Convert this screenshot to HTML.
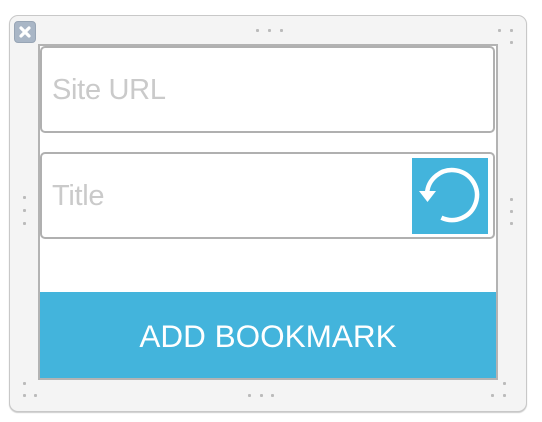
<!DOCTYPE html>
<html><head><style>
body{margin:0;width:542px;height:422px;background:#fff;position:relative;overflow:hidden;font-family:"Liberation Sans",Helvetica,sans-serif}
.panel{position:absolute;left:9px;top:15px;width:516px;height:395px;border:1px solid #c8c8c8;border-radius:9px;background:#f4f4f4;box-shadow:0 1px 1px #ccc}
.inner{position:absolute;left:38px;top:44px;width:456px;height:333px;background:#fff;border:2px solid #b3b3b3;border-bottom:none}
.inp{position:absolute;left:40px;width:451px;height:83px;border:2px solid #b0b0b0;border-radius:5px;background:#fff}
.ph{position:absolute;left:10px;top:26px;font-size:29px;color:#cacaca;font-weight:300;letter-spacing:-0.3px}
.btn{position:absolute;left:38px;top:292px;width:460px;height:88px;background:#43b4dc;border:2px solid #b3b3b3;border-top:none;box-sizing:border-box;color:#fff;font-size:31.5px;text-align:center;line-height:88px}
.d{position:absolute;width:3px;height:3px;background:#bbb;border-radius:1px}
.close{position:absolute;left:14px;top:21px;width:22px;height:22px;border-radius:4px;background:#a9b6c6;border:1px solid #98a5b5;box-sizing:border-box}
</style></head><body>
<div class="panel"></div>
<div class="inner"></div>
<div class="inp" style="top:46px"><span class="ph">Site URL</span></div>
<div class="inp" style="top:152px"><span class="ph">Title</span>
<div style="position:absolute;left:370px;top:4px;width:76px;height:76px;background:#43b4dc">
<svg width="76" height="76" viewBox="0 0 76 76"><path d="M15 36 A25 25 0 1 1 29.4 59.7" fill="none" stroke="#fff" stroke-width="4.5"/><path d="M7 33 L24 33 L15.5 44 Z" fill="#fff"/></svg></div></div>
<div class="btn">ADD BOOKMARK</div>
<div class="close"><svg width="20" height="20" viewBox="0 0 20 20"><path d="M6 6 L14 14 M14 6 L6 14" stroke="#fff" stroke-width="3.2" stroke-linecap="round"/></svg></div>
<div class="d" style="left:256px;top:29px"></div><div class="d" style="left:268px;top:29px"></div><div class="d" style="left:280px;top:29px"></div>
<div class="d" style="left:498px;top:29px"></div><div class="d" style="left:510px;top:29px"></div><div class="d" style="left:510px;top:41px"></div>
<div class="d" style="left:23px;top:196px"></div><div class="d" style="left:23px;top:209px"></div><div class="d" style="left:23px;top:222px"></div>
<div class="d" style="left:510px;top:198px"></div><div class="d" style="left:510px;top:210px"></div><div class="d" style="left:510px;top:222px"></div>
<div class="d" style="left:23px;top:382px"></div><div class="d" style="left:23px;top:394px"></div><div class="d" style="left:34px;top:394px"></div>
<div class="d" style="left:248px;top:394px"></div><div class="d" style="left:260px;top:394px"></div><div class="d" style="left:271px;top:394px"></div>
<div class="d" style="left:491px;top:394px"></div><div class="d" style="left:503px;top:394px"></div><div class="d" style="left:503px;top:382px"></div>
</body></html>
